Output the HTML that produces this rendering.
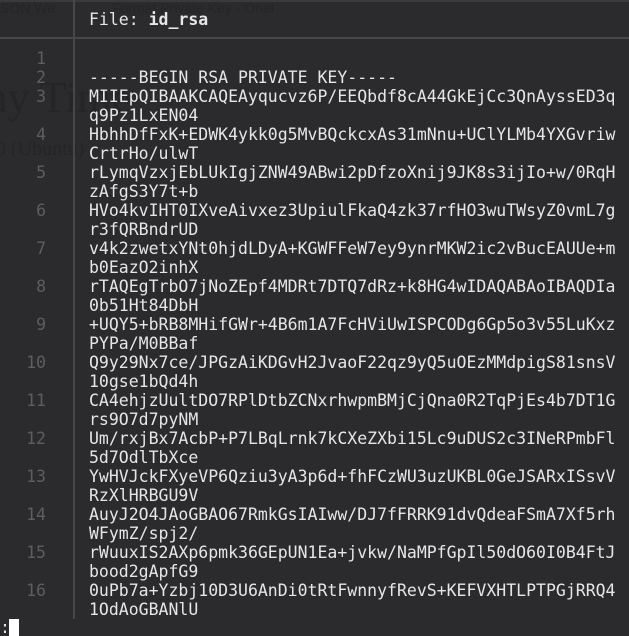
<!DOCTYPE html>
<html><head><style>
html,body{margin:0;padding:0;width:629px;height:636px;overflow:hidden;background:#2b2b2e;}
body{position:relative;font-family:"DejaVu Sans Mono","Liberation Mono",monospace;font-size:16.5px;color:#e6e6e6;}
.ghost{position:absolute;color:#252527;font-family:"Liberation Serif",serif;}
.hl{position:absolute;background:#47474a;}
.row{position:absolute;left:0;height:19px;line-height:19px;white-space:pre;}
.n{position:absolute;width:46px;text-align:right;color:#5e5e62;}
.t{position:absolute;left:89px;}
</style></head><body>
<div class="ghost" style="left:-12px;top:72px;font-size:44px;">ay Time</div>
<div class="ghost" style="left:-4px;top:138px;font-size:20px;">0 (Ubuntu)</div>
<div class="ghost" style="left:0;top:0;font-size:14px;font-family:'Liberation Sans',sans-serif;">SON We</div>
<div class="ghost" style="left:112px;top:0;font-size:14px;font-family:'Liberation Sans',sans-serif;">Format Private Key - Onel</div>
<div class="hl" style="left:0;top:0;width:629px;height:2px;background:#3a3a3d"></div>
<div class="hl" style="left:0;top:37px;width:629px;height:2px;"></div>
<div class="hl" style="left:73px;top:0;width:2px;height:37px;"></div>
<div class="hl" style="left:73px;top:39px;width:2px;height:580px;"></div>
<div class="row" style="top:10px;"><span class="t">File: <b>id_rsa</b></span></div>
<div id="c"></div>
<div class="row" style="top:618px;"><span style="position:absolute;left:0;">:</span><span style="position:absolute;left:9px;top:1px;width:10px;height:18px;background:#fff"></span></div>
<script>
var recs=[["",""],["-----BEGIN RSA PRIVATE KEY-----"],
["MIIEpQIBAAKCAQEAyqucvz6P/EEQbdf8cA44GkEjCc3QnAyssED3q","q9Pz1LxEN04"],
["HbhhDfFxK+EDWK4ykk0g5MvBQckcxAs31mNnu+UClYLMb4YXGvriw","CrtrHo/ulwT"],
["rLymqVzxjEbLUkIgjZNW49ABwi2pDfzoXnij9JK8s3ijIo+w/0RqH","zAfgS3Y7t+b"],
["HVo4kvIHT0IXveAivxez3UpiulFkaQ4zk37rfHO3wuTWsyZ0vmL7g","r3fQRBndrUD"],
["v4k2zwetxYNt0hjdLDyA+KGWFFeW7ey9ynrMKW2ic2vBucEAUUe+m","b0EazO2inhX"],
["rTAQEgTrbO7jNoZEpf4MDRt7DTQ7dRz+k8HG4wIDAQABAoIBAQDIa","0b51Ht84DbH"],
["+UQY5+bRB8MHifGWr+4B6m1A7FcHViUwISPCODg6Gp5o3v55LuKxz","PYPa/M0BBaf"],
["Q9y29Nx7ce/JPGzAiKDGvH2JvaoF22qz9yQ5uOEzMMdpigS81snsV","10gse1bQd4h"],
["CA4ehjzUultDO7RPlDtbZCNxrhwpmBMjCjQna0R2TqPjEs4b7DT1G","rs9O7d7pyNM"],
["Um/rxjBx7AcbP+P7LBqLrnk7kCXeZXbi15Lc9uDUS2c3INeRPmbFl","5d7OdlTbXce"],
["YwHVJckFXyeVP6Qziu3yA3p6d+fhFCzWU3uzUKBL0GeJSARxISsvV","RzXlHRBGU9V"],
["AuyJ2O4JAoGBAO67RmkGsIAIww/DJ7fFRRK91dvQdeaFSmA7Xf5rh","WFymZ/spj2/"],
["rWuuxIS2AXp6pmk36GEpUN1Ea+jvkw/NaMPfGpIl50dO60I0B4FtJ","bood2gApfG9"],
["0uPb7a+Yzbj10D3U6AnDi0tRtFwnnyfRevS+KEFVXHTLPTPGjRRQ4","1OdAoGBANlU"]];
var h="",y=49;
recs.forEach(function(r,i){
 if(i==0){h+='<div class="row" style="top:'+y+'px"><span class="n">1</span></div>';y+=19;return;}
 r.forEach(function(s,j){
  h+='<div class="row" style="top:'+y+'px">'+(j==0?'<span class="n">'+(i+1)+'</span>':'')+'<span class="t">'+s.replace(/&/g,"&amp;").replace(/</g,"&lt;")+'</span></div>';
  y+=19;});
});
document.getElementById("c").innerHTML=h;
</script>
</body></html>
